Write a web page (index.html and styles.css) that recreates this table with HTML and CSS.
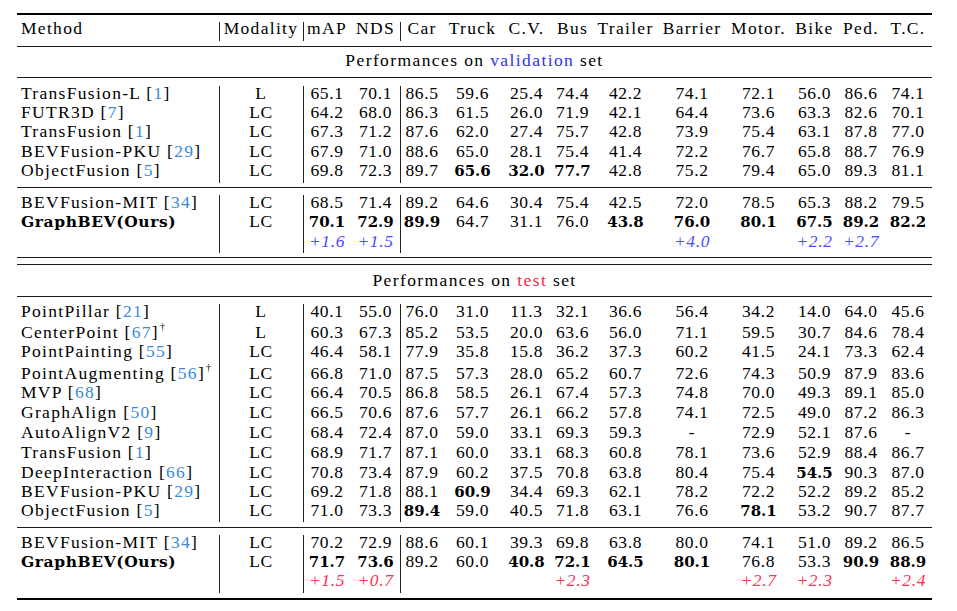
FILE: index.html
```html
<!DOCTYPE html>
<html>
<head>
<meta charset="utf-8">
<title>GraphBEV results</title>
<link rel="stylesheet" href="styles.css">
</head>
<body>
<table class="tbl">
<colgroup>
<col class="w-method"><col class="w-mod"><col class="w-map"><col class="w-nds"><col class="w-car"><col class="w-truck"><col class="w-cv"><col class="w-bus"><col class="w-trailer"><col class="w-barrier"><col class="w-motor"><col class="w-bike"><col class="w-ped"><col class="w-tc">
</colgroup>
<tbody>
<tr class="rule thick"><td colspan="14"></td></tr>
<tr class="gap g7"><td colspan="14"></td></tr>
<tr class="hdr"><td class="m">Method</td><td class="v">Modality</td><td class="v">mAP</td><td>NDS</td><td class="v">Car</td><td>Truck</td><td>C.V.</td><td>Bus</td><td>Trailer</td><td>Barrier</td><td>Motor.</td><td>Bike</td><td>Ped.</td><td>T.C.</td></tr>
<tr class="gap g5"><td colspan="14"></td></tr>
<tr class="rule"><td colspan="14"></td></tr>
<tr class="title t1"><td colspan="14">Performances on <span class="blue">validation</span> set</td></tr>
<tr class="rule"><td colspan="14"></td></tr>
<tr class="gap g8"><td colspan="14"></td></tr>

<tr class="d h19"><td class="m">TransFusion-L [<span class="c">1</span>]</td><td class="v">L</td><td class="v">65.1</td><td>70.1</td><td class="v">86.5</td><td>59.6</td><td>25.4</td><td>74.4</td><td>42.2</td><td>74.1</td><td>72.1</td><td>56.0</td><td>86.6</td><td>74.1</td></tr>
<tr class="d h19"><td class="m">FUTR3D [<span class="c">7</span>]</td><td class="v">LC</td><td class="v">64.2</td><td>68.0</td><td class="v">86.3</td><td>61.5</td><td>26.0</td><td>71.9</td><td>42.1</td><td>64.4</td><td>73.6</td><td>63.3</td><td>82.6</td><td>70.1</td></tr>
<tr class="d h20"><td class="m">TransFusion [<span class="c">1</span>]</td><td class="v">LC</td><td class="v">67.3</td><td>71.2</td><td class="v">87.6</td><td>62.0</td><td>27.4</td><td>75.7</td><td>42.8</td><td>73.9</td><td>75.4</td><td>63.1</td><td>87.8</td><td>77.0</td></tr>
<tr class="d h19"><td class="m">BEVFusion-PKU [<span class="c">29</span>]</td><td class="v">LC</td><td class="v">67.9</td><td>71.0</td><td class="v">88.6</td><td>65.0</td><td>28.1</td><td>75.4</td><td>41.4</td><td>72.2</td><td>76.7</td><td>65.8</td><td>88.7</td><td>76.9</td></tr>
<tr class="d h20"><td class="m">ObjectFusion [<span class="c">5</span>]</td><td class="v">LC</td><td class="v">69.8</td><td>72.3</td><td class="v">89.7</td><td class="b">65.6</td><td class="b">32.0</td><td class="b">77.7</td><td>42.8</td><td>75.2</td><td>79.4</td><td>65.0</td><td>89.3</td><td>81.1</td></tr>

<tr class="gap g4"><td colspan="14"></td></tr>
<tr class="rule"><td colspan="14"></td></tr>
<tr class="gap g7"><td colspan="14"></td></tr>

<tr class="d h19"><td class="m">BEVFusion-MIT [<span class="c">34</span>]</td><td class="v">LC</td><td class="v">68.5</td><td>71.4</td><td class="v">89.2</td><td>64.6</td><td>30.4</td><td>75.4</td><td>42.5</td><td>72.0</td><td>78.5</td><td>65.3</td><td>88.2</td><td>79.5</td></tr>
<tr class="d h20"><td class="m mb">GraphBEV(Ours)</td><td class="v">LC</td><td class="v b">70.1</td><td class="b">72.9</td><td class="v b">89.9</td><td>64.7</td><td>31.1</td><td>76.0</td><td class="b">43.8</td><td class="b">76.0</td><td class="b">80.1</td><td class="b">67.5</td><td class="b">89.2</td><td class="b">82.2</td></tr>
<tr class="d h19"><td class="m"></td><td class="v"></td><td class="v ib">+1.6</td><td class="ib">+1.5</td><td class="v"></td><td></td><td></td><td></td><td></td><td class="ib">+4.0</td><td></td><td class="ib">+2.2</td><td class="ib">+2.7</td><td></td></tr>

<tr class="gap g4"><td colspan="14"></td></tr>
<tr class="rule"><td colspan="14"></td></tr>
<tr class="gap g6"><td colspan="14"></td></tr>
<tr class="rule"><td colspan="14"></td></tr>
<tr class="title t2"><td colspan="14">Performances on <span class="red">test</span> set</td></tr>
<tr class="rule"><td colspan="14"></td></tr>
<tr class="gap g7"><td colspan="14"></td></tr>

<tr class="d h19"><td class="m">PointPillar [<span class="c">21</span>]</td><td class="v">L</td><td class="v">40.1</td><td>55.0</td><td class="v">76.0</td><td>31.0</td><td>11.3</td><td>32.1</td><td>36.6</td><td>56.4</td><td>34.2</td><td>14.0</td><td>64.0</td><td>45.6</td></tr>
<tr class="d tall"><td class="m">CenterPoint [<span class="c">67</span>]<sup class="dag">†</sup></td><td class="v">L</td><td class="v">60.3</td><td>67.3</td><td class="v">85.2</td><td>53.5</td><td>20.0</td><td>63.6</td><td>56.0</td><td>71.1</td><td>59.5</td><td>30.7</td><td>84.6</td><td>78.4</td></tr>
<tr class="d h20"><td class="m">PointPainting [<span class="c">55</span>]</td><td class="v">LC</td><td class="v">46.4</td><td>58.1</td><td class="v">77.9</td><td>35.8</td><td>15.8</td><td>36.2</td><td>37.3</td><td>60.2</td><td>41.5</td><td>24.1</td><td>73.3</td><td>62.4</td></tr>
<tr class="d tall"><td class="m">PointAugmenting [<span class="c">56</span>]<sup class="dag">†</sup></td><td class="v">LC</td><td class="v">66.8</td><td>71.0</td><td class="v">87.5</td><td>57.3</td><td>28.0</td><td>65.2</td><td>60.7</td><td>72.6</td><td>74.3</td><td>50.9</td><td>87.9</td><td>83.6</td></tr>
<tr class="d h20"><td class="m">MVP [<span class="c">68</span>]</td><td class="v">LC</td><td class="v">66.4</td><td>70.5</td><td class="v">86.8</td><td>58.5</td><td>26.1</td><td>67.4</td><td>57.3</td><td>74.8</td><td>70.0</td><td>49.3</td><td>89.1</td><td>85.0</td></tr>
<tr class="d h20"><td class="m">GraphAlign [<span class="c">50</span>]</td><td class="v">LC</td><td class="v">66.5</td><td>70.6</td><td class="v">87.6</td><td>57.7</td><td>26.1</td><td>66.2</td><td>57.8</td><td>74.1</td><td>72.5</td><td>49.0</td><td>87.2</td><td>86.3</td></tr>
<tr class="d h20"><td class="m">AutoAlignV2 [<span class="c">9</span>]</td><td class="v">LC</td><td class="v">68.4</td><td>72.4</td><td class="v">87.0</td><td>59.0</td><td>33.1</td><td>69.3</td><td>59.3</td><td>-</td><td>72.9</td><td>52.1</td><td>87.6</td><td>-</td></tr>
<tr class="d h20"><td class="m">TransFusion [<span class="c">1</span>]</td><td class="v">LC</td><td class="v">68.9</td><td>71.7</td><td class="v">87.1</td><td>60.0</td><td>33.1</td><td>68.3</td><td>60.8</td><td>78.1</td><td>73.6</td><td>52.9</td><td>88.4</td><td>86.7</td></tr>
<tr class="d h19"><td class="m">DeepInteraction [<span class="c">66</span>]</td><td class="v">LC</td><td class="v">70.8</td><td>73.4</td><td class="v">87.9</td><td>60.2</td><td>37.5</td><td>70.8</td><td>63.8</td><td>80.4</td><td>75.4</td><td class="b">54.5</td><td>90.3</td><td>87.0</td></tr>
<tr class="d h19"><td class="m">BEVFusion-PKU [<span class="c">29</span>]</td><td class="v">LC</td><td class="v">69.2</td><td>71.8</td><td class="v">88.1</td><td class="b">60.9</td><td>34.4</td><td>69.3</td><td>62.1</td><td>78.2</td><td>72.2</td><td>52.2</td><td>89.2</td><td>85.2</td></tr>
<tr class="d h19"><td class="m">ObjectFusion [<span class="c">5</span>]</td><td class="v">LC</td><td class="v">71.0</td><td>73.3</td><td class="v b">89.4</td><td>59.0</td><td>40.5</td><td>71.8</td><td>63.1</td><td>76.6</td><td class="b">78.1</td><td>53.2</td><td>90.7</td><td>87.7</td></tr>

<tr class="gap g5"><td colspan="14"></td></tr>
<tr class="rule"><td colspan="14"></td></tr>
<tr class="gap g7"><td colspan="14"></td></tr>

<tr class="d h19"><td class="m">BEVFusion-MIT [<span class="c">34</span>]</td><td class="v">LC</td><td class="v">70.2</td><td>72.9</td><td class="v">88.6</td><td>60.1</td><td>39.3</td><td>69.8</td><td>63.8</td><td>80.0</td><td>74.1</td><td>51.0</td><td>89.2</td><td>86.5</td></tr>
<tr class="d h19"><td class="m mb">GraphBEV(Ours)</td><td class="v">LC</td><td class="v b">71.7</td><td class="b">73.6</td><td class="v">89.2</td><td>60.0</td><td class="b">40.8</td><td class="b">72.1</td><td class="b">64.5</td><td class="b">80.1</td><td>76.8</td><td>53.3</td><td class="b">90.9</td><td class="b">88.9</td></tr>
<tr class="d h20"><td class="m"></td><td class="v"></td><td class="v ir">+1.5</td><td class="ir">+0.7</td><td class="v"></td><td></td><td></td><td class="ir">+2.3</td><td></td><td></td><td class="ir">+2.7</td><td class="ir">+2.3</td><td></td><td class="ir">+2.4</td></tr>

<tr class="gap g5"><td colspan="14"></td></tr>
<tr class="rule thick"><td colspan="14"></td></tr>
</tbody>
</table>
</body>
</html>
```

FILE: styles.css
```css
* {
  box-sizing: border-box;
}

body {
  margin: 0;
  background: #ffffff;
}

.tbl {
  margin: 13px 0 0 17px;
  width: 915px;
  table-layout: fixed;
  border-collapse: separate;
  border-spacing: 0;
  font-family: "Liberation Serif", "Times New Roman", serif;
  font-size: 17.5px;
  color: #000;
}

.w-method { width: 202px; }
.w-mod { width: 84px; }
.w-map { width: 48px; }
.w-nds { width: 49px; }
.w-car { width: 44px; }
.w-truck { width: 57px; }
.w-cv { width: 51px; }
.w-bus { width: 41px; }
.w-trailer { width: 65px; }
.w-barrier { width: 68px; }
.w-motor { width: 65px; }
.w-bike { width: 47px; }
.w-ped { width: 46px; }
.w-tc { width: 48px; }

.tbl td {
  padding: 0;
  text-align: center;
  white-space: nowrap;
  line-height: 15.8px;
  vertical-align: baseline;
  letter-spacing: 0.6px;
}

/* booktabs-like rules and separations */
.rule td {
  height: 1px;
  background: #1c1c1c;
  font-size: 0;
  line-height: 0;
}

.rule.thick td {
  height: 2px;
  background: #000;
}

.gap td {
  font-size: 0;
  line-height: 0;
}

.g4 td { height: 4px; }
.g5 td { height: 5px; }
.g6 td { height: 6px; }
.g7 td { height: 7px; }
.g8 td { height: 8px; }

/* header */
.hdr td {
  height: 19px;
  line-height: 13.6px;
  letter-spacing: 1.3px;
}

/* section titles */
.title td {
  letter-spacing: 1.4px;
}

.t1 td {
  height: 30px;
  padding-top: 5.7px;
}

.t2 td {
  height: 31px;
  padding-top: 7.7px;
}

.blue { color: #3131f2; }
.red { color: #ff1e44; }

/* data rows */
.h19 td { height: 19px; }
.h20 td { height: 20px; }

.d.tall td {
  height: 21px;
  padding-top: 2px;
}

.tbl td.m {
  text-align: left;
  padding-left: 4px;
  letter-spacing: 1.3px;
}

.v {
  box-shadow: inset 1px 0 0 #222;
}

.c { color: #3a8ad8; }

.dag {
  font-size: 10px;
  line-height: 0;
  vertical-align: baseline;
  position: relative;
  top: -8px;
  letter-spacing: 0;
  margin-left: 1px;
}

.tbl td.b {
  font-family: "DejaVu Serif", serif;
  font-weight: bold;
  font-size: 15px;
  letter-spacing: 0;
}

.tbl td.mb {
  font-family: "DejaVu Serif", serif;
  font-weight: bold;
  font-size: 15.5px;
  letter-spacing: 0.6px;
}

.ib,
.ir {
  font-style: italic;
  letter-spacing: 1.4px;
}

.ib { color: #4b4bff; }
.ir { color: #ff2f55; }
```
